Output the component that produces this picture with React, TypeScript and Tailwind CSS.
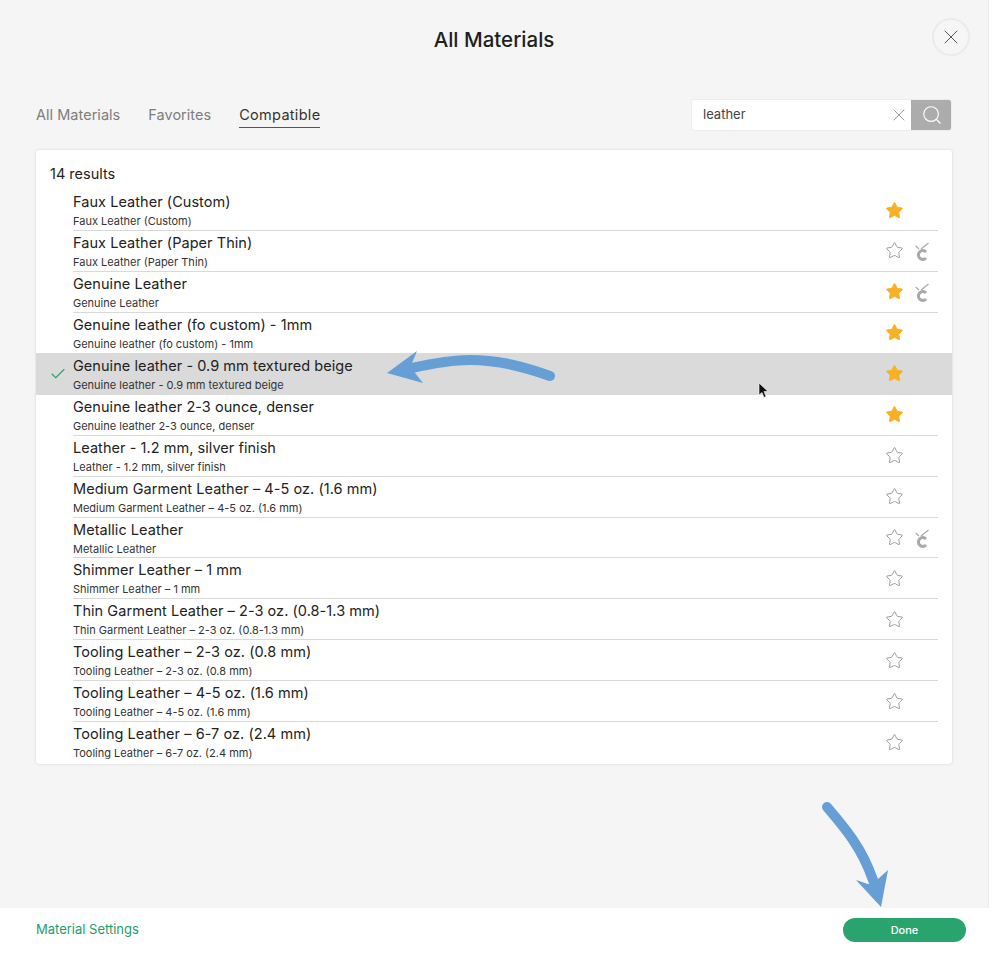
import React from 'react';
import { Check, Search, Star, X } from 'lucide-react';

interface Material {
    name: string;
    favorite: boolean;
    cricut?: boolean;
    selected?: boolean;
}

const materials: Material[] = [
    { name: 'Faux Leather (Custom)', favorite: true },
    { name: 'Faux Leather (Paper Thin)', favorite: false, cricut: true },
    { name: 'Genuine Leather', favorite: true, cricut: true },
    { name: 'Genuine leather (fo custom) - 1mm', favorite: true },
    { name: 'Genuine leather - 0.9 mm textured beige', favorite: true, selected: true },
    { name: 'Genuine leather 2-3 ounce, denser', favorite: true },
    { name: 'Leather - 1.2 mm, silver finish', favorite: false },
    { name: 'Medium Garment Leather – 4-5 oz. (1.6 mm)', favorite: false },
    { name: 'Metallic Leather', favorite: false, cricut: true },
    { name: 'Shimmer Leather – 1 mm', favorite: false },
    { name: 'Thin Garment Leather – 2-3 oz. (0.8-1.3 mm)', favorite: false },
    { name: 'Tooling Leather – 2-3 oz. (0.8 mm)', favorite: false },
    { name: 'Tooling Leather – 4-5 oz. (1.6 mm)', favorite: false },
    { name: 'Tooling Leather – 6-7 oz. (2.4 mm)', favorite: false },
];

const CricutMark: React.FC = () => (
    <svg width="18" height="20" viewBox="0 0 18 20" fill="none" className="text-[#a9a9a9]">
        <path d="M14 11 A4.4 4.4 0 1 0 14 17" stroke="currentColor" strokeWidth="3" />
        <path d="M9 8 L16.5 2" stroke="currentColor" strokeWidth="1.2" />
        <path d="M3.7 5 L7 8" stroke="currentColor" strokeWidth="1.2" />
    </svg>
);

const Row: React.FC<{ item: Material; last: boolean }> = ({ item, last }) => (
    <div className={`flex ${item.selected ? 'relative -mt-px h-[41.95px] bg-[#dadada] pt-px' : 'h-[40.95px]'}`}>
        <div className="flex w-[37px] shrink-0 items-center justify-center pl-[6px]">
            {item.selected && <Check size={18} strokeWidth={1.5} className="text-[#2ba36d]" />}
        </div>
        <div className={`mr-[14px] flex flex-1 items-start ${!last && !item.selected ? 'border-b border-[#d9d9d9]' : ''}`}>
            <div className="flex-1 pt-[2px]">
                <div className="text-[14.5px] leading-[20px] tracking-[0.05px] text-[#222]">{item.name}</div>
                <div className="mt-[1px] text-[11px] leading-[16px] text-[#333]">{item.name}</div>
            </div>
            <div className="flex h-[40px] w-[53px] shrink-0 items-center gap-[8px]">
                <Star
                    size={19}
                    strokeWidth={1.25}
                    className={item.favorite ? 'fill-[#f8b125] text-[#f8b125]' : 'text-[#9b9b9b]'}
                />
                {item.cricut && <CricutMark />}
            </div>
        </div>
    </div>
);

const App: React.FC = () => {
    return (
        <div className="relative flex h-[954px] w-[1000px] flex-col overflow-hidden bg-white font-['Inter',sans-serif]">
            <div className="mr-[11px] flex h-[908px] flex-col border-r border-[#ececec] bg-[#f5f5f5] pl-[36px] pr-[36px]">
                <div className="relative flex h-[80px] items-center justify-center">
                    <h1 className="text-[20.5px] font-medium text-[#1f1f1f]">All Materials</h1>
                    <button className="absolute right-[-18px] top-[18px] flex h-[38px] w-[38px] items-center justify-center rounded-full border-2 border-[#ebebeb] bg-[#f6f6f6]">
                        <X size={24} strokeWidth={1} className="text-[#555]" />
                    </button>
                </div>

                <div className="mt-[19px] flex h-[32px] items-center justify-between">
                    <div className="flex gap-[28px] pt-[2px] text-[14.5px] tracking-[0.03px] text-[#7d7d7d]">
                        <span>All Materials</span>
                        <span>Favorites</span>
                        <span className="border-b border-[#555] pb-[1px] tracking-[0.3px] text-[#333]">Compatible</span>
                    </div>
                    <div className="flex h-[32px] w-[261px] overflow-hidden rounded-[3px] border border-[#ececec] bg-white">
                        <span className="flex-1 pl-[11px] text-[13px] leading-[28px] text-[#444]">leather</span>
                        <X size={20} strokeWidth={1} className="mr-[2px] mt-[5px] text-[#8a8a8a]" />
                        <div className="-my-px -mr-px flex w-[41px] items-center justify-center bg-[#acacac]">
                            <Search size={22} strokeWidth={1.25} className="text-white" />
                        </div>
                    </div>
                </div>

                <div className="mt-[19px] h-[613.5px] rounded-[3px] bg-white shadow-[0_0_3px_rgba(0,0,0,0.14)]">
                    <div className="h-[40px] pl-[14px] pt-[14px] text-[14.5px] leading-[20px] text-[#222]">14 results</div>
                    {materials.map((item, i) => (
                        <Row key={item.name} item={item} last={i === materials.length - 1} />
                    ))}
                </div>
            </div>

            <div className="flex h-[44px] items-center justify-between pl-[36px] pr-[34px]">
                <span className="text-[13px] text-[#1f9d68]">Material Settings</span>
                <button className="h-[24px] w-[123px] rounded-full bg-[#2aa46f] text-[11px] font-medium text-white">Done</button>
            </div>

            {/* hand-drawn annotation arrows */}
            <svg className="pointer-events-none absolute left-0 top-0" width="1000" height="954" viewBox="0 0 1000 954">
                <path d="M550 376 C525 367 500 360 470 360 C450 360 430 364 412 368" fill="none" stroke="#659fd6" strokeWidth="10" strokeLinecap="round" />
                <path d="M387 373 L417 351 L412 363 L415 373 L423 383 Z" fill="#659fd6" />
                <path d="M827 807 C845 828 862 848 873 880" fill="none" stroke="#659fd6" strokeWidth="10" strokeLinecap="round" />
                <path d="M881 907 L856 880 L868 884 L878 879 L888 870 Z" fill="#659fd6" />
            </svg>

            {/* mouse pointer */}
            <svg className="pointer-events-none absolute left-[758px] top-[382px]" width="11" height="17" viewBox="0 0 11 17">
                <path d="M1 1 L1 13 L4 10.5 L6 15.5 L8 14.5 L6 9.5 L10 9.5 Z" fill="#111" stroke="#fff" strokeWidth="0.6" />
            </svg>
        </div>
    );
};

export default App;
